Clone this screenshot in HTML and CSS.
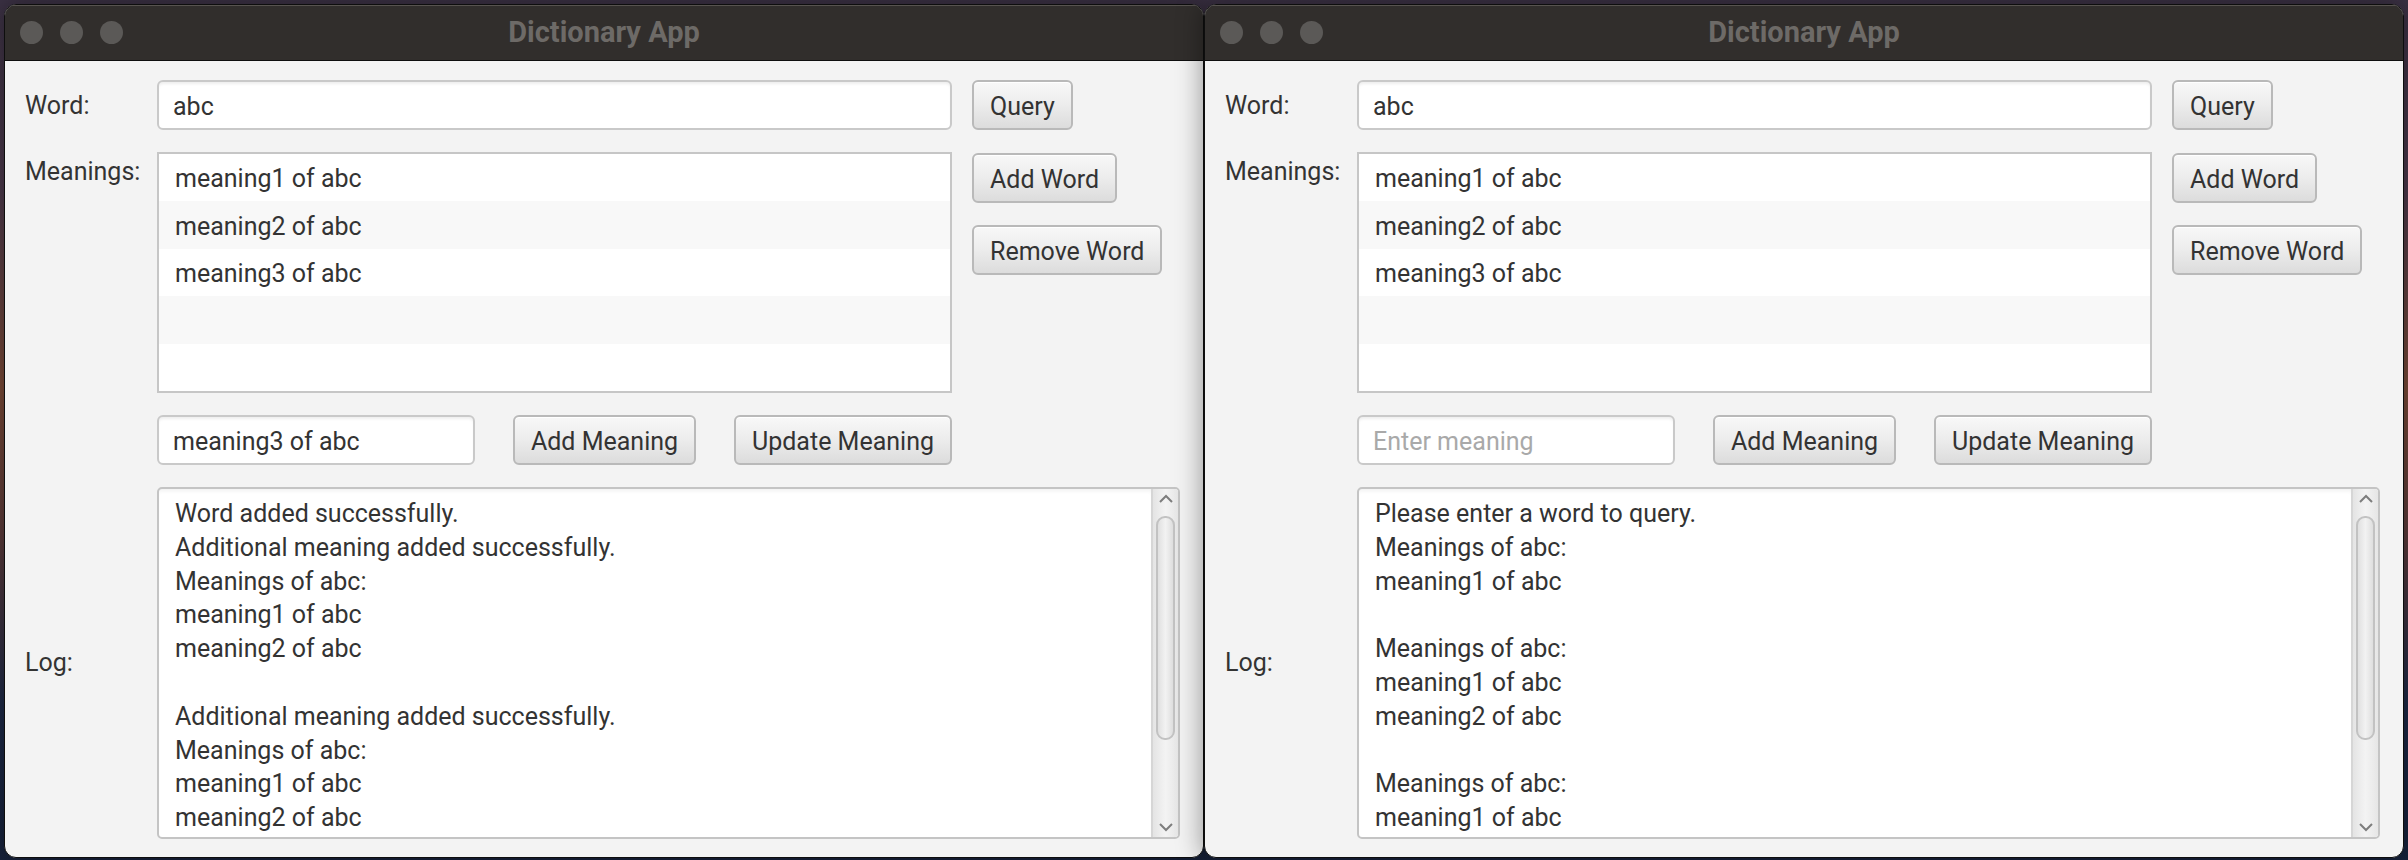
FILE: index.html
```html
<!DOCTYPE html>
<html lang="en">
<head>
<meta charset="utf-8">
<title>Dictionary App</title>
<link rel="stylesheet" href="styles.css">
</head>
<body>
<div class="desktop">
  <section class="window win-back">
    <header class="titlebar">
      <div class="lights"><span class="light"></span><span class="light"></span><span class="light"></span></div>
      <div class="title">Dictionary App</div>
      <div></div>
    </header>
    <div class="content">
      <label class="lbl lbl-word">Word:</label>
      <input class="field field-word" type="text" value="abc">
      <button class="btn btn-query">Query</button>
      <label class="lbl lbl-meanings">Meanings:</label>
      <ul class="list">
        <li>meaning1 of abc</li>
        <li>meaning2 of abc</li>
        <li>meaning3 of abc</li>
        <li></li>
        <li></li>
      </ul>
      <div class="side-btns">
        <button class="btn">Add Word</button>
        <button class="btn">Remove Word</button>
      </div>
      <div class="meaning-row">
        <input class="field field-meaning" type="text" value="meaning3 of abc" placeholder="Enter meaning">
        <button class="btn">Add Meaning</button>
        <button class="btn">Update Meaning</button>
      </div>
      <label class="lbl lbl-log">Log:</label>
      <div class="log">
        <div class="log-text">
          <div class="line">Word added successfully.</div>
          <div class="line">Additional meaning added successfully.</div>
          <div class="line">Meanings of abc:</div>
          <div class="line">meaning1 of abc</div>
          <div class="line">meaning2 of abc</div>
          <div class="line">&nbsp;</div>
          <div class="line">Additional meaning added successfully.</div>
          <div class="line">Meanings of abc:</div>
          <div class="line">meaning1 of abc</div>
          <div class="line">meaning2 of abc</div>
        </div>
        <div class="scrollbar">
          <svg class="arrow" width="16" height="20" viewBox="0 0 16 20"><polyline points="2,13 8,7 14,13" fill="none" stroke="#7d7d7d" stroke-width="2"/></svg>
          <div class="thumb"></div>
          <div class="spacer"></div>
          <svg class="arrow" width="16" height="20" viewBox="0 0 16 20"><polyline points="2,7 8,13 14,7" fill="none" stroke="#7d7d7d" stroke-width="2"/></svg>
        </div>
      </div>
    </div>
  </section>

  <section class="window win-front">
    <header class="titlebar">
      <div class="lights"><span class="light"></span><span class="light"></span><span class="light"></span></div>
      <div class="title">Dictionary App</div>
      <div></div>
    </header>
    <div class="content">
      <label class="lbl lbl-word">Word:</label>
      <input class="field field-word" type="text" value="abc">
      <button class="btn btn-query">Query</button>
      <label class="lbl lbl-meanings">Meanings:</label>
      <ul class="list">
        <li>meaning1 of abc</li>
        <li>meaning2 of abc</li>
        <li>meaning3 of abc</li>
        <li></li>
        <li></li>
      </ul>
      <div class="side-btns">
        <button class="btn">Add Word</button>
        <button class="btn">Remove Word</button>
      </div>
      <div class="meaning-row">
        <input class="field field-meaning" type="text" value="" placeholder="Enter meaning">
        <button class="btn">Add Meaning</button>
        <button class="btn">Update Meaning</button>
      </div>
      <label class="lbl lbl-log">Log:</label>
      <div class="log">
        <div class="log-text">
          <div class="line">Please enter a word to query.</div>
          <div class="line">Meanings of abc:</div>
          <div class="line">meaning1 of abc</div>
          <div class="line">&nbsp;</div>
          <div class="line">Meanings of abc:</div>
          <div class="line">meaning1 of abc</div>
          <div class="line">meaning2 of abc</div>
          <div class="line">&nbsp;</div>
          <div class="line">Meanings of abc:</div>
          <div class="line">meaning1 of abc</div>
        </div>
        <div class="scrollbar">
          <svg class="arrow" width="16" height="20" viewBox="0 0 16 20"><polyline points="2,13 8,7 14,13" fill="none" stroke="#7d7d7d" stroke-width="2"/></svg>
          <div class="thumb"></div>
          <div class="spacer"></div>
          <svg class="arrow" width="16" height="20" viewBox="0 0 16 20"><polyline points="2,7 8,13 14,7" fill="none" stroke="#7d7d7d" stroke-width="2"/></svg>
        </div>
      </div>
    </div>
  </section>
</div>
</body>
</html>
```
FILE: styles.css
```css
* { box-sizing: border-box; }
html, body { margin: 0; padding: 0; }
body {
  width: 2408px;
  height: 860px;
  overflow: hidden;
  font-family: Roboto, "Liberation Sans", sans-serif;
  color: #333333;
}
.desktop {
  position: relative;
  width: 2408px;
  height: 860px;
  overflow: hidden;
  background: linear-gradient(180deg, #3c3245 0%, #4d3a4c 22%, #7b4b38 45%, #5d3c3b 62%, #1e2a48 82%, #17223c 100%);
}
.window {
  position: absolute;
  top: 4px;
  width: 1200px;
  height: 854px;
  border: 1px solid #0e0e0e;
  border-radius: 12px;
  overflow: hidden;
  background: #f3f3f3;
  box-shadow: 0 0 26px 2px rgba(0, 0, 0, 0.38);
  display: flex;
  flex-direction: column;
}
.win-back { left: 4px; }
.win-front { left: 1204px; }

.titlebar {
  flex: none;
  height: 56px;
  background: #312e2c;
  border-bottom: 1px solid #0e0e0e;
  box-shadow: inset 0 1px 0 #57534f;
  display: grid;
  grid-template-columns: 1fr auto 1fr;
  align-items: center;
}
.lights {
  display: flex;
  gap: 17px;
  padding-left: 15px;
}
.light {
  width: 23px;
  height: 23px;
  border-radius: 50%;
  background: #5b5957;
}
.title {
  font-weight: bold;
  font-size: 29px;
  line-height: 34px;
  color: #6d6a67;
  padding-bottom: 2px;
}

.content {
  flex: 1;
  display: grid;
  grid-template-columns: 112px 795px 208px;
  grid-template-rows: 50px 241px 50px 352px;
  column-gap: 20px;
  row-gap: 22px;
  padding: 19px 0 0 20px;
  align-content: start;
}
.lbl {
  font-size: 25px;
  line-height: 34px;
  color: #333;
  grid-column: 1;
}
.lbl-word { grid-row: 1; align-self: center; padding-top: 2px; }
.lbl-meanings { grid-row: 2; align-self: start; padding-top: 3px; }
.lbl-log { grid-row: 4; align-self: center; }

.field {
  height: 50px;
  margin: 0;
  border: 2px solid #c9c9c9;
  border-radius: 6px;
  background: #ffffff;
  box-shadow: inset 0 3px 3px -1px rgba(0, 0, 0, 0.07);
  padding: 2px 0 0 14px;
  font-family: inherit;
  font-size: 25px;
  color: #333;
  outline: none;
}
.field::placeholder { color: #a9a9a9; }
.field-word { grid-column: 2; grid-row: 1; width: 795px; }
.field-meaning { width: 318px; }

.btn {
  height: 50px;
  margin: 0;
  padding: 2px 16px 0;
  border: 2px solid #b9b9b9;
  border-radius: 6px;
  background: linear-gradient(180deg, #f8f8f8 0%, #ececec 50%, #dcdcdc 100%);
  box-shadow: inset 0 1px 0 #ffffff;
  font-family: inherit;
  font-size: 25px;
  color: #333;
  white-space: nowrap;
}
.btn-query { grid-column: 3; grid-row: 1; justify-self: start; }

.list {
  grid-column: 2;
  grid-row: 2;
  margin: 0;
  padding: 0;
  list-style: none;
  border: 2px solid #c6c6c6;
  background: #ffffff;
  display: flex;
  flex-direction: column;
}
.list li {
  flex: 1;
  display: flex;
  align-items: center;
  padding: 2px 0 0 16px;
  font-size: 25px;
  color: #333;
}
.list li:nth-child(even) { background: #f8f8f8; }

.side-btns {
  grid-column: 3;
  grid-row: 2;
  display: flex;
  flex-direction: column;
  align-items: flex-start;
  gap: 22px;
  padding-top: 1px;
}

.meaning-row {
  grid-column: 2;
  grid-row: 3;
  display: flex;
  justify-content: space-between;
  align-items: center;
}

.log {
  grid-column: 2 / 4;
  grid-row: 4;
  border: 2px solid #c4c4c4;
  border-radius: 5px;
  background: #ffffff;
  display: flex;
  overflow: hidden;
}
.log-text {
  flex: 1;
  padding: 8px 0 0 16px;
  font-size: 25px;
  line-height: 33.8px;
  color: #333;
  overflow: hidden;
  box-shadow: inset 0 4px 4px -2px rgba(0, 0, 0, 0.06);
}
.line { white-space: nowrap; }
.scrollbar {
  flex: none;
  width: 27px;
  border-left: 2px solid #d6d6d6;
  background: linear-gradient(90deg, #e4e4e4 0%, #f3f3f3 50%, #e6e6e6 100%);
  display: flex;
  flex-direction: column;
  align-items: center;
}
.arrow { flex: none; display: block; }
.thumb {
  flex: none;
  margin-top: 7px;
  width: 19px;
  height: 224px;
  border: 2px solid #c2c2c2;
  border-radius: 9px;
  background: linear-gradient(90deg, #e0e0e0 0%, #f2f2f2 50%, #dedede 100%);
}
.spacer { flex: 1; }
```
